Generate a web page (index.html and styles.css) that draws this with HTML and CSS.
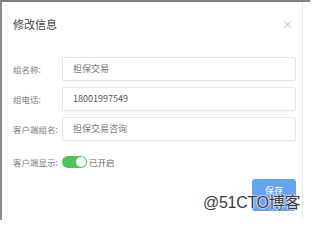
FILE: index.html
```html
<!DOCTYPE html>
<html>
<head>
<meta charset="utf-8">
<link rel="stylesheet" href="styles.css">
</head>
<body>
<div class="frame">
  <div class="modal">
    <div class="header">
      <span class="title">修改信息</span>
      <span class="close">×</span>
    </div>
    <div class="form">
      <div class="row">
        <label class="label">组名称:</label>
        <div class="input">担保交易</div>
      </div>
      <div class="row">
        <label class="label">组电话:</label>
        <div class="input dark">18001997549</div>
      </div>
      <div class="row">
        <label class="label">客户端组名:</label>
        <div class="input">担保交易咨询</div>
      </div>
      <div class="row switch-row">
        <label class="label">客户端显示:</label>
        <span class="switch"><span class="knob"></span></span>
        <span class="state">已开启</span>
      </div>
    </div>
    <div class="footer">
      <button class="btn">保存</button>
    </div>
  </div>
  <div class="watermark">@51CTO博客</div>
</div>
</body>
</html>
```
FILE: styles.css
```css
html, body {
  margin: 0;
  padding: 0;
  width: 310px;
  height: 220px;
  overflow: hidden;
  background: #fff;
  font-family: "Noto Sans CJK SC", "Liberation Sans", sans-serif;
}
.frame {
  position: relative;
  width: 310px;
  height: 220px;
  border-top: 2px solid #808080;
  box-sizing: border-box;
  overflow: hidden;
}
.modal {
  width: 303px;
  height: 240px;
  border-left: 2px solid #8c8c8c;
  border-right: 1px solid #ececec;
  box-sizing: border-box;
  background: #fff;
}
.header {
  display: flex;
  justify-content: space-between;
  align-items: center;
  padding: 14px 9px 0 11px;
  height: 16px;
}
.title {
  font-size: 11px;
  color: #444;
  line-height: 16px;
}
.close {
  font-size: 11px;
  color: #bbb;
  line-height: 16px;
}
.form {
  margin-top: 24px;
  padding: 0 6px 0 11px;
  display: flex;
  flex-direction: column;
  gap: 5px;
}
.row {
  display: flex;
  align-items: center;
  height: 25px;
}
.label {
  width: 49px;
  font-size: 8.5px;
  color: #808080;
  white-space: nowrap;
}
.input {
  flex: 1;
  height: 24px;
  border: 1px solid #e6e6e6;
  border-radius: 2px;
  box-sizing: border-box;
  padding-left: 10px;
  font-size: 9px;
  color: #777;
  line-height: 22px;
  box-shadow: 0 1px 1px rgba(0,0,0,0.04);
}
.input.dark {
  color: #555;
}
.switch-row {
  margin-top: 3px;
}
.switch {
  display: flex;
  justify-content: flex-end;
  align-items: center;
  width: 25px;
  height: 12px;
  border-radius: 6px;
  background: #4cc45a;
  padding: 0 1px;
  box-sizing: border-box;
}
.knob {
  width: 10px;
  height: 10px;
  border-radius: 50%;
  background: #fff;
}
.state {
  margin-left: 2px;
  font-size: 8.5px;
  color: #666;
}
.footer {
  display: flex;
  justify-content: flex-end;
  padding: 5px 6px 0 0;
}
.btn {
  width: 44px;
  height: 32px;
  border: none;
  border-radius: 3px;
  background: #64a3f2;
  color: #fff;
  font-family: inherit;
  font-size: 9px;
  padding: 0;
  padding-bottom: 10px;
}
.watermark {
  position: absolute;
  left: 203px;
  top: 187px;
  font-size: 16px;
  color: #3a3a3a;
  font-family: "Liberation Sans", "Noto Sans CJK SC", sans-serif;
  text-shadow: 0 0 2px #fff, 0 0 2px #fff, 0 0 1px #fff;
  letter-spacing: -0.3px;
}
```
